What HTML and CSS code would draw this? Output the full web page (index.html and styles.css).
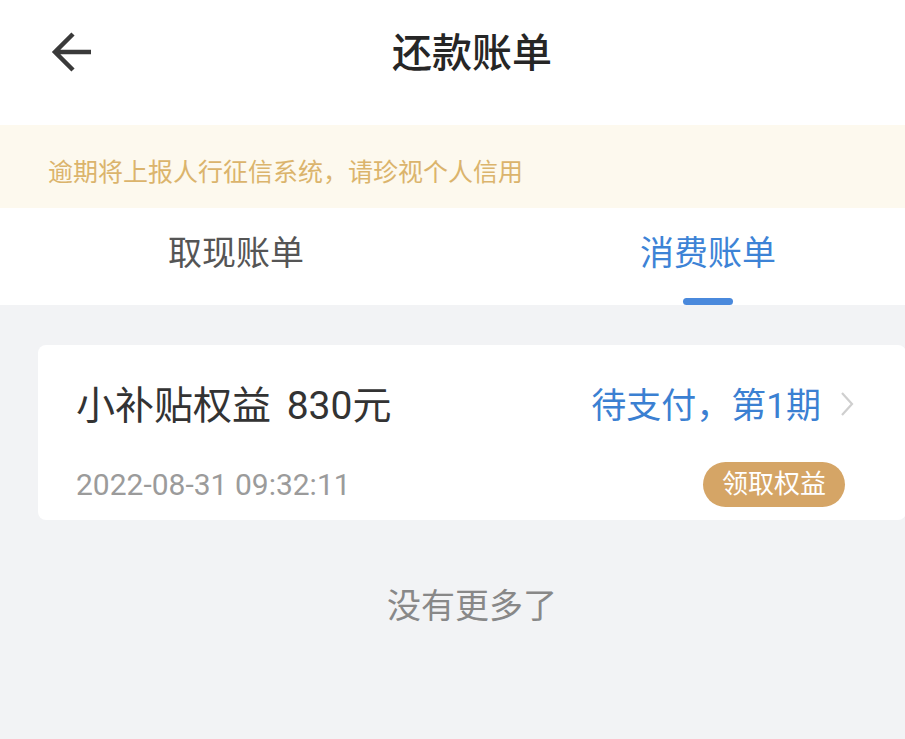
FILE: index.html
```html
<!DOCTYPE html>
<html lang="zh-CN">
<head>
    <meta charset="UTF-8">
    <meta name="viewport" content="width=device-width, initial-scale=1.0">
    <title>还款账单</title>
    <link rel="stylesheet" href="styles.css">
</head>
<body>

<div class="app">
    <div class="header">
        <svg class="back" width="44" height="44" viewBox="0 0 44 44">
            <path d="M40 21H5M22 3L4 21l18 18" fill="none" stroke="#3a3a3a" stroke-width="4.5" stroke-linecap="butt" stroke-linejoin="miter"/>
        </svg>
        <h1 class="title">还款账单</h1>
    </div>

    <div class="notice">逾期将上报人行征信系统，请珍视个人信用</div>

    <!-- tabs -->
    <div class="tabs">
        <div class="tab">
            <span class="tab-label">取现账单</span>
        </div>
        <div class="tab active">
            <span class="tab-label">消费账单</span>
            <span class="tab-bar"></span>
        </div>
    </div>

    <div class="content">
        <div class="card">
            <div class="card-row">
                <span class="card-title">小补贴权益 830元</span>
                <span class="status">待支付，第1期
                    <svg class="chevron" width="16" height="26" viewBox="0 0 16 26">
                        <path d="M3 2l10 11L3 24" fill="none" stroke="#cfcfcf" stroke-width="2.2"/>
                    </svg>
                </span>
            </div>
            <div class="card-row bottom">
                <span class="date">2022-08-31 09:32:11</span>
                <span class="badge">领取权益</span>
            </div>
        </div>

        <div class="no-more">没有更多了</div>
    </div>
</div>

</body>
</html>
```

FILE: styles.css
```css
body {
    margin: 0;
    overflow: hidden;
    background-color: #f2f3f5;
    font-family: Roboto, "Noto Sans CJK SC", sans-serif;
}
.app {
    width: 944px;
    height: 739px;
    background-color: #f2f3f5;
}
.header {
    position: relative;
    height: 125px;
    background-color: white;
    text-align: center;
}
.back {
    position: absolute;
    left: 51px;
    top: 31px;
}
.title {
    margin: 0;
    font-size: 40px;
    font-weight: 500;
    line-height: 108px;
    color: #262626;
}
.notice {
    height: 71px;
    padding: 12px 0 0 48px;
    line-height: 71px;
    background-color: #fdf9ee;
    color: #dbb46c;
    font-size: 25px;
}
.tabs {
    display: flex;
    background-color: white;
}
.tab {
    flex: 1;
    height: 97px;
    display: flex;
    flex-direction: column;
    align-items: center;
}
.tab-label {
    line-height: 90px;
    font-size: 34px;
    color: #555;
}
.tab.active .tab-label {
    color: #3d83d6;
}
.tab-bar {
    width: 50px;
    height: 7px;
    border-radius: 4px;
    background-color: #4a89dc;
}
.content {
    padding: 40px 38px 0;
}
.card {
    height: 145px;
    padding: 30px 51px 0 38px;
    background-color: white;
    border-radius: 8px;
    box-sizing: content-box;
}
.card-row {
    display: flex;
    justify-content: space-between;
    align-items: center;
    height: 54px;
}
.card-row.bottom {
    height: 45px;
    margin-top: 33px;
}
.card-title {
    font-size: 39px;
    word-spacing: 6px;
    color: #333;
}
.status {
    display: flex;
    align-items: center;
    font-size: 35px;
    color: #3b80d2;
}
.chevron {
    margin-left: 18px;
    margin-top: 4px;
}
.date {
    font-size: 30px;
    color: #9b9b9b;
}
.badge {
    height: 45px;
    line-height: 45px;
    padding: 0 19px;
    margin-right: 10px;
    border-radius: 23px;
    background-color: #d5a566;
    color: white;
    font-size: 26px;
}
.no-more {
    margin-top: 50px;
    line-height: 72px;
    text-align: center;
    font-size: 34px;
    color: #888;
}
```
